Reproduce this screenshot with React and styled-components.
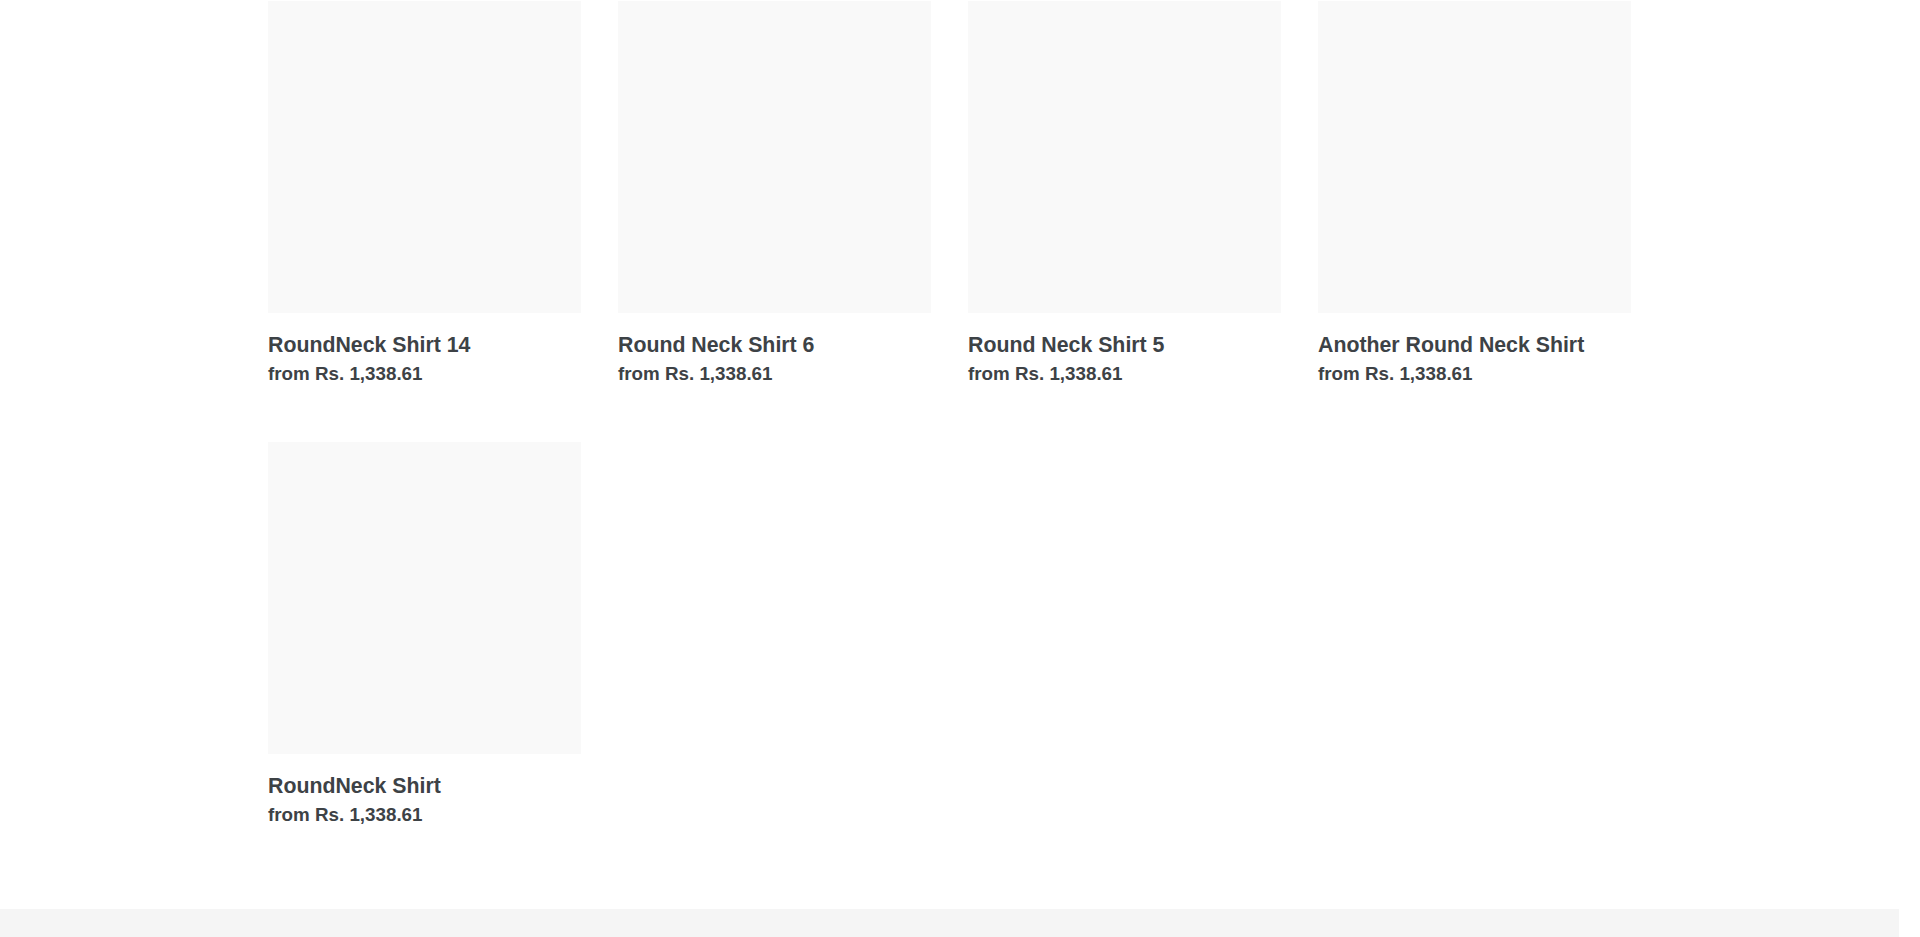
import React from 'react';
import styled, { createGlobalStyle } from 'styled-components';

const GlobalStyle = createGlobalStyle`
  html, body {
    margin: 0;
    padding: 0;
    background: #ffffff;
    overflow: hidden;
  }
  body {
    font-family: 'Liberation Sans', Arial, Helvetica, sans-serif;
    color: #3d4246;
  }
`;

const products = [
  { title: 'RoundNeck Shirt 14', price: 'from Rs. 1,338.61' },
  { title: 'Round Neck Shirt 6', price: 'from Rs. 1,338.61' },
  { title: 'Round Neck Shirt 5', price: 'from Rs. 1,338.61' },
  { title: 'Another Round Neck Shirt', price: 'from Rs. 1,338.61' },
  { title: 'RoundNeck Shirt', price: 'from Rs. 1,338.61' },
];

export default function App() {
  return (
    <Page>
      <GlobalStyle />
      <Main>
        <Grid>
          {products.map(p => (
            <Card key={p.title}>
              <Thumb />
              <Title>{p.title}</Title>
              <Price>{p.price}</Price>
            </Card>
          ))}
        </Grid>
      </Main>
      <Footer />
    </Page>
  );
}

const Page = styled.div`
  width: 1899px;
  min-height: 937px;
  padding-top: 1px;
`;

const Main = styled.main`
  padding-bottom: 81px;
`;

const Grid = styled.div`
  width: 1363px;
  margin: 0 auto;
  display: grid;
  grid-template-columns: repeat(4, 313px);
  column-gap: 37px;
  row-gap: 55px;
`;

const Card = styled.div`
  display: flex;
  flex-direction: column;
`;

const Thumb = styled.div`
  width: 313px;
  height: 312px;
  background-color: #f9f9f9;
`;

const Title = styled.div`
  margin-top: 19px;
  font-size: 21.3px;
  line-height: 27px;
  font-weight: 700;
`;

const Price = styled.div`
  margin-top: 1px;
  font-size: 18.8px;
  line-height: 27px;
  font-weight: 700;
`;

const Footer = styled.footer`
  height: 300px;
  background-color: #f5f5f5;
`;
